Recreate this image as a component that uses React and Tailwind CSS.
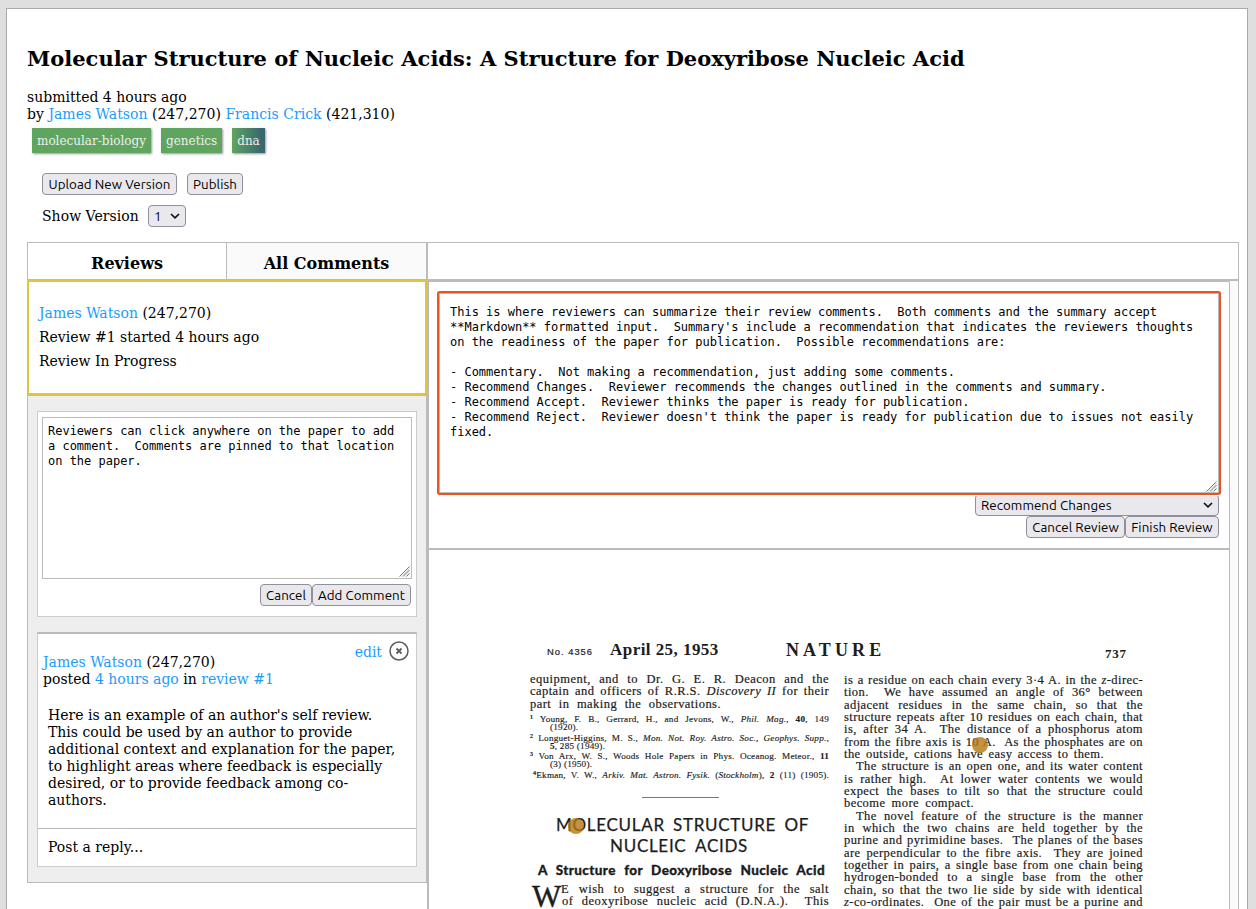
import React from "react";

function Btn({ children, className }) {
  return (
    <button
      className={`box-border flex h-[22px] items-center justify-center whitespace-nowrap rounded-[4px] border border-[#8f8f9d] bg-[#e9e9ed] pt-[2px] font-['Ubuntu','Noto_Sans',sans-serif] text-[13.333px] leading-[20px] tracking-[0.06px] text-black ${className}`}
    >
      {children}
    </button>
  );
}

function Chevron() {
  return (
    <svg width="10" height="6" viewBox="0 0 10 6" className="shrink-0">
      <path d="M1 1 L5 4.8 L9 1" fill="none" stroke="#111" strokeWidth="1.7" />
    </svg>
  );
}

function Select({ children, className }) {
  return (
    <div
      className={`box-border flex h-[22px] items-center justify-between rounded-[4px] border border-[#8f8f9d] bg-[#e9e9ed] pl-[5px] pr-[5px] font-['Ubuntu','Noto_Sans',sans-serif] text-[13.333px] leading-[20px] tracking-[0.06px] text-black ${className}`}
    >
      <span className="pt-[2px]">{children}</span>
      <Chevron />
    </div>
  );
}

function Grip({ className }) {
  return (
    <svg width="11" height="11" viewBox="0 0 11 11" className={`absolute ${className}`}>
      <path d="M0.5 10.5 L10.5 0.5 M4 10.5 L10.5 4 M7.5 10.5 L10.5 7.5" stroke="#777" strokeWidth="1" fill="none" />
      <path d="M2 10.8 L10.8 2 M5.6 10.8 L10.8 5.6" stroke="#ccc" strokeWidth="0.8" fill="none" />
    </svg>
  );
}

function Link({ children }) {
  return <a className="text-[#1b9cfc]">{children}</a>;
}

function Tag({ children, className }) {
  return (
    <span
      className={`flex h-[25px] items-center px-[5px] pt-[2px] text-[12px] leading-[15px] text-[#eeeeee] shadow-[1px_1px_2px_rgba(80,60,80,0.55)] ${className}`}
    >
      {children}
    </span>
  );
}

/* One full-width line of the printed paper. */
function Line({ children, className = "" }) {
  return (
    <div
      className={`h-[12.33px] whitespace-nowrap text-[12.5px] leading-[12.33px] [-webkit-text-stroke:0.2px_#1c1c1c] [text-align-last:justify] ${className}`}
    >
      {children}
    </div>
  );
}

function Ref({ children, className = "" }) {
  return (
    <div className={`whitespace-nowrap text-[9.2px] tracking-[0.22px] [-webkit-text-stroke:0.15px_#1c1c1c] ${className}`}>
      {children}
    </div>
  );
}

/* Raised reference number that does not affect the line box. */
function Mark({ children }) {
  return <sup className="text-[6px] font-bold leading-[0] [vertical-align:0px]">{children}</sup>;
}

const N = "\u00a0";

const SUMMARY = `This is where reviewers can summarize their review comments.  Both comments and the summary accept
**Markdown** formatted input.  Summary's include a recommendation that indicates the reviewers thoughts
on the readiness of the paper for publication.  Possible recommendations are:

- Commentary.  Not making a recommendation, just adding some comments.
- Recommend Changes.  Reviewer recommends the changes outlined in the comments and summary.
- Recommend Accept.  Reviewer thinks the paper is ready for publication.
- Recommend Reject.  Reviewer doesn't think the paper is ready for publication due to issues not easily
fixed.`;

const COMMENT = `Reviewers can click anywhere on the paper to add
a comment.  Comments are pinned to that location
on the paper.`;

function LeftColumn() {
  return (
    <div className="w-[400px] shrink-0">
      <div className="box-border flex h-[38px] border border-[#bbbbbb] text-center text-[16px] font-bold leading-[41px]">
        <div className="w-[199px] border-r border-[#bbbbbb]">Reviews</div>
        <div className="flex-1 bg-[#fafafa]">All Comments</div>
      </div>
      <div className="box-border h-[115px] border-2 border-[#dfc445] pl-[10px] pt-[19px] leading-[24px]">
        <div>
          <Link>James Watson</Link> (247,270)
        </div>
        <div>Review #1 started 4 hours ago</div>
        <div>Review In Progress</div>
      </div>
      <div className="box-border h-[488px] border border-[#bbbbbb] bg-[#eeeeee] px-[9px] pt-[15px]">
        <div className="box-border h-[206px] border border-[#cccccc] bg-white px-[4px] pt-[5px]">
          <div className="relative h-[162px]">
            <textarea
              readOnly
              defaultValue={COMMENT}
              className="box-border block h-[162px] w-[370px] resize-none overflow-hidden border border-[#bbbbbb] bg-white p-[5px] pt-[6px] font-['DejaVu_Sans_Mono',monospace] text-[12px] leading-[15px] tracking-[-0.01px] outline-none"
            />
            <Grip className="bottom-[2px] right-[2px]" />
          </div>
          <div className="mt-[5px] flex justify-end pr-px">
            <Btn className="w-[52px]">Cancel</Btn>
            <Btn className="w-[99px]">Add Comment</Btn>
          </div>
        </div>

        <div className="mt-[15px] box-border h-[235px] border border-t-2 border-[#cccccc] border-t-[#bbbbbb] bg-white">
          <div className="flex h-[72px] justify-between pl-[5px] pr-[7px]">
            <div className="pt-[20px]">
              <div>
                <Link>James Watson</Link> (247,270)
              </div>
              <div>
                posted <Link>4 hours ago</Link> in <Link>review #1</Link>
              </div>
            </div>
            <div className="flex items-start pt-[7px]">
              <span className="mr-[7px] mt-[3px]">
                <Link>edit</Link>
              </span>
              <svg width="20" height="20" viewBox="0 0 20 20">
                <circle cx="10" cy="10" r="9" fill="none" stroke="#5c5c5c" strokeWidth="1.5" />
                <path d="M7.5 7.5 L12.5 12.5 M12.5 7.5 L7.5 12.5" stroke="#5c5c5c" strokeWidth="1.8" />
              </svg>
            </div>
          </div>
          <div className="h-[123px] border-b border-[#bbbbbb] pl-[10px] pt-px">
            Here is an example of an author's self review.
            <br />
            This could be used by an author to provide
            <br />
            additional context and explanation for the paper,
            <br />
            to highlight areas where feedback is especially
            <br />
            desired, or to provide feedback among co-
            <br />
            authors.
          </div>
          <div className="pl-[10px] pt-[10px]">Post a reply...</div>
        </div>
      </div>
    </div>
  );
}

function Paper() {
  return (
    <div className="relative flex-1 overflow-hidden font-['Liberation_Serif',serif] text-[#1c1c1c]">
      <div className="flex h-[123px] items-start whitespace-nowrap pl-[118px] pt-[90px] leading-[20px]">
        <span className="w-[63px] pt-[2px] font-['Liberation_Sans',sans-serif] text-[9.4px] tracking-[1px] [-webkit-text-stroke:0.2px_#1c1c1c]">
          No. 4356
        </span>
        <span className="w-[176px] text-[17px] font-bold tracking-[0.45px]">April 25, 1953</span>
        <span className="w-[319px] text-[18px] font-bold tracking-[4.1px]">NATURE</span>
        <span className="pt-[4px] text-[13px] font-bold tracking-[0.7px]">737</span>
      </div>
      <div className="flex pl-[101px]">
        <div className="w-[299px]">
          <Line className="tracking-[0.5px]">equipment, and to Dr. G. E. R. Deacon and the</Line>
          <Line className="tracking-[0.45px]">
            captain and officers of R.R.S. <i>Discovery II</i> for their
          </Line>
          <Line className="w-[191px] tracking-[0.45px]">part in making the observations.</Line>
          <Ref className="mt-[4px] h-[8.5px] leading-[10px] [text-align-last:justify]">
            <Mark>1</Mark> Young, F. B., Gerrard, H., and Jevons, W., <i>Phil. Mag.</i>, <b>40</b>, 149
          </Ref>
          <Ref className="h-[10.5px] pl-[20px] leading-[10px]">(1920).</Ref>
          <Ref className="h-[8px] leading-[10px] [text-align-last:justify]">
            <Mark>2</Mark> Longuet-Higgins, M. S., <i>Mon. Not. Roy. Astro. Soc., Geophys. Supp.</i>,
          </Ref>
          <Ref className="h-[10.5px] pl-[20px] leading-[10px]">
            <b>5</b>, 285 (1949).
          </Ref>
          <Ref className="h-[8px] leading-[10px] [text-align-last:justify]">
            <Mark>3</Mark> Von Arx, W. S., Woods Hole Papers in Phys. Oceanog. Meteor., <b>11</b>
          </Ref>
          <Ref className="h-[10.5px] pl-[20px] leading-[10px]">(3) (1950).</Ref>
          <Ref className="h-[10px] pl-[3px] leading-[10px] [text-align-last:justify]">
            <Mark>4</Mark>Ekman, V. W., <i>Arkiv. Mat. Astron. Fysik.</i> (<i>Stockholm</i>), <b>2</b> (11) (1905).
          </Ref>
          <div className="ml-[112px] mt-[17px] h-px w-[77px] bg-[#777777]" />
          <div className="mt-[16px] whitespace-nowrap font-['Lato',sans-serif] text-[17px] leading-[21px] tracking-[0.7px] [-webkit-text-stroke:0.25px_#1c1c1c]">
            <div className="ml-[26px] w-[253px] [text-align-last:justify]">MOLECULAR STRUCTURE OF</div>
            <div className="ml-[80px] w-[138px] [text-align-last:justify]">NUCLEIC ACIDS</div>
          </div>
          <div className="ml-[8px] mt-[4px] w-[287px] whitespace-nowrap font-['Lato',sans-serif] text-[13.5px] font-black leading-[20px] tracking-[0.4px] [-webkit-text-stroke:0.3px_#1c1c1c] [text-align-last:justify]">
            A Structure for Deoxyribose Nucleic Acid
          </div>
          <div className="mt-[3px] flex">
            <span className="ml-[2px] h-[26px] w-[29px] text-[31px] leading-[28px] [-webkit-text-stroke:0.4px_#1c1c1c]">W</span>
            <div className="flex-1">
              <Line className="tracking-[0.5px]">E wish to suggest a structure for the salt</Line>
              <Line className="pl-[1px] tracking-[0.5px]">of deoxyribose nucleic acid (D.N.A.).{N} This</Line>
            </div>
          </div>
        </div>

        <div className="ml-[15px] w-[299px] pt-[1px] tracking-[0.42px]">
          <Line>is a residue on each chain every 3·4 A. in the <i>z</i>-direc-</Line>
          <Line>tion.{N} We have assumed an angle of 36° between</Line>
          <Line>adjacent residues in the same chain, so that the</Line>
          <Line>structure repeats after 10 residues on each chain, that</Line>
          <Line>is, after 34 A.{N} The distance of a phosphorus atom</Line>
          <Line>from the fibre axis is 10 A.{N} As the phosphates are on</Line>
          <Line className="w-[260px]">the outside, cations have easy access to them.</Line>
          <Line className="pl-[12px]">The structure is an open one, and its water content</Line>
          <Line>is rather high.{N} At lower water contents we would</Line>
          <Line>expect the bases to tilt so that the structure could</Line>
          <Line className="w-[130px]">become more compact.</Line>
          <Line className="pl-[12px]">The novel feature of the structure is the manner</Line>
          <Line>in which the two chains are held together by the</Line>
          <Line>purine and pyrimidine bases.{N} The planes of the bases</Line>
          <Line>are perpendicular to the fibre axis.{N} They are joined</Line>
          <Line>together in pairs, a single base from one chain being</Line>
          <Line>hydrogen-bonded to a single base from the other</Line>
          <Line>chain, so that the two lie side by side with identical</Line>
          <Line><i>z</i>-co-ordinates.{N} One of the pair must be a purine and</Line>
        </div>
      </div>
      <span className="absolute left-[139px] top-[268px] h-4 w-4 rounded-full bg-[#b5750f]/80" />
      <span className="absolute left-[543px] top-[187px] h-4 w-4 rounded-full bg-[#b5750f]/80" />
    </div>
  );
}

function RightColumn() {
  return (
    <div className="flex w-[812px] flex-col">
      <div className="box-border h-[39px] shrink-0 border border-b-2 border-[#bbbbbb]" />
      <div className="flex flex-1 border-l-2 border-r border-[#bbbbbb]">
        <div className="box-border flex w-[801px] flex-col border-r border-t border-[#bbbbbb]">
          <div className="box-border h-[268px] shrink-0 border-b-2 border-[#bbbbbb] pl-[10px] pr-[10px] pt-[11px]">
            <div className="relative z-10 h-[201px]">
              <textarea
                readOnly
                defaultValue={SUMMARY}
                className="box-border block h-[200px] w-[780px] resize-none overflow-hidden rounded-[1px] border border-[#bbbbbb] bg-white p-[10px] pt-[11px] font-['DejaVu_Sans_Mono',monospace] text-[12px] leading-[15px] tracking-[-0.01px] shadow-[0_0_0_2px_#e95420,0_0_0_3px_#ffffff] outline-none"
              />
              <Grip className="bottom-[2px] right-[2px]" />
            </div>
            <div className="flex flex-col items-end">
              <Select className="w-[244px]">Recommend Changes</Select>
              <div className="flex">
                <Btn className="w-[99px]">Cancel Review</Btn>
                <Btn className="w-[94px]">Finish Review</Btn>
              </div>
            </div>
          </div>
          <Paper />
        </div>
        <div className="flex-1 bg-[#fafafa]" />
      </div>
    </div>
  );
}

export default function App() {
  return (
    <div className="box-border h-[909px] overflow-hidden bg-[#dfdfdf] pl-[6px] pt-[8px] font-['DejaVu_Serif',serif] text-[14px] leading-[17px] text-black">
      <div className="box-border flex h-[910px] w-[1242px] flex-col border border-[#aaaaaa] bg-white pl-[20px]">
        <h1 className="mt-[37px] whitespace-nowrap text-[21px] font-bold leading-[25px]">
          Molecular Structure of Nucleic Acids: A Structure for Deoxyribose Nucleic Acid
        </h1>
        <div className="mt-[18px]">submitted 4 hours ago</div>
        <div className="tracking-[0.015px]">
          by <Link>James Watson</Link> (247,270) <Link>Francis Crick</Link> (421,310)
        </div>
        <div className="ml-[5px] mt-[5px] flex gap-[10px]">
          <Tag className="bg-[#5fa55f]">molecular-biology</Tag>
          <Tag className="bg-[#5fa55f]">genetics</Tag>
          <Tag className="bg-linear-to-r from-[#5fa55f] to-[#3b666f] to-90%">dna</Tag>
        </div>
        <div className="ml-[15px] mt-[20px] flex gap-[10px]">
          <Btn className="w-[135px]">Upload New Version</Btn>
          <Btn className="w-[56px]">Publish</Btn>
        </div>
        <div className="ml-[15px] mt-[10px] flex h-[22px] items-center">
          <span className="w-[106px] tracking-[0.03px]">Show Version</span>
          <Select className="w-[38px]">1</Select>
        </div>
        <div className="mt-[15px] flex flex-1">
          <LeftColumn />
          <RightColumn />
        </div>
      </div>
    </div>
  );
}
